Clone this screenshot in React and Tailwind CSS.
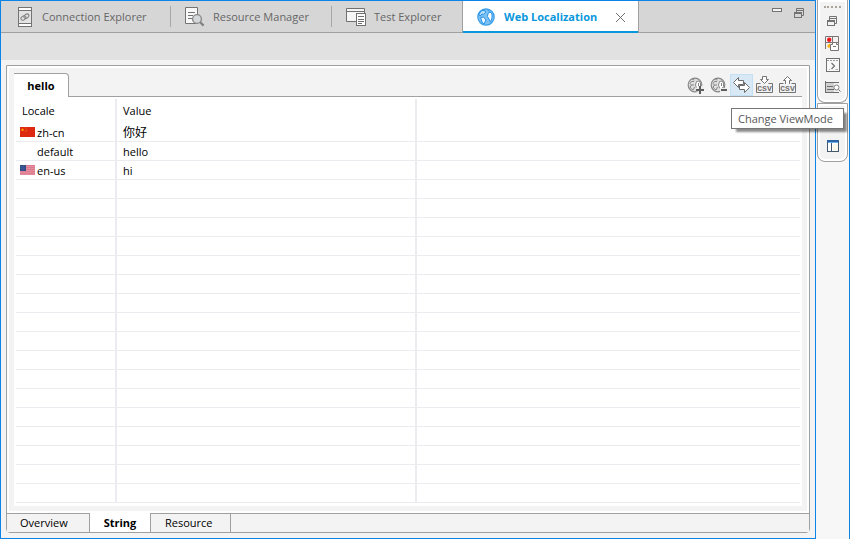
import React from 'react';

function ConnectionIcon() {
  return (
    <svg width="16" height="20" viewBox="0 0 16 20" fill="none" stroke="#737373" aria-hidden="true">
      <rect x="1.5" y="0.5" width="13" height="19" fill="#fff" />
      <rect x="2" y="4" width="12" height="12" fill="#e4e4e4" stroke="none" />
      <path d="M2 3.5H14M2 16.5H14" />
      <ellipse cx="6.4" cy="11" rx="2.7" ry="1.9" transform="rotate(-35 6.4 11)" stroke="#808080" />
      <ellipse cx="9.4" cy="9.2" rx="2.7" ry="1.9" transform="rotate(-35 9.4 9.2)" stroke="#808080" />
    </svg>
  );
}

function ResourceIcon() {
  return (
    <svg width="20" height="20" viewBox="0 0 20 20" fill="none" stroke="#737373" aria-hidden="true">
      <path d="M0.5 0.5H12.5V16.5H0.5Z" fill="#f8f8f8" />
      <path d="M3 5.5H10M3 8.5H8M3 11.5H7" />
      <circle cx="12" cy="12" r="4.4" fill="#d5d8da" stroke="#8a8a8a" strokeWidth="1.4" />
      <path d="M15.2 15.2L18.6 18.6" stroke="#808080" strokeWidth="2.2" />
    </svg>
  );
}

function TestIcon() {
  return (
    <svg width="20" height="20" viewBox="0 0 20 20" fill="none" stroke="#707070" aria-hidden="true">
      <path d="M0.5 1.5H18.5V14.5H0.5Z" fill="#f6f6f6" />
      <path d="M1 4.5H18" />
      <rect x="10.5" y="6.5" width="9" height="12" fill="#fff" />
      <path d="M12 9.5H18M12 12.5H18M12 14.5H18M12 16.5H16" />
    </svg>
  );
}

function GlobeIcon() {
  return (
    <svg width="18" height="18" viewBox="0 0 18 18" fill="none" aria-hidden="true">
      <circle cx="9" cy="9" r="8.2" fill="#7cc0f4" stroke="#3a9ee9" strokeWidth="1.2" />
      <path d="M4 3L7.5 2L8.5 4.5L6.5 6.5L5 6L3 8L2 6.5Z" fill="#b9def8" stroke="#2392e8" />
      <path d="M3.5 9.5L6.5 9L9 12L7 16L5 14Z" fill="#eaf5fd" stroke="#2392e8" />
      <path d="M11 5.5L13 4L15 6V10L13.5 14L12 11L10.5 8.5Z" fill="#fff" stroke="#2392e8" />
      <path d="M10.5 1.5L12 3.5" stroke="#2392e8" />
    </svg>
  );
}

function CloseIcon() {
  return (
    <svg width="11" height="11" viewBox="0 0 11 11" stroke="#707070" aria-hidden="true">
      <path d="M1 1L10 10M10 1L1 10" />
    </svg>
  );
}

function RestoreIcon() {
  return (
    <svg width="11" height="11" viewBox="0 0 11 11" fill="none" stroke="#737373" aria-hidden="true">
      <path d="M2.5 4V0.5H9.5V7.5H7M3 2.5H9" />
      <rect x="0.5" y="4.5" width="7" height="5" />
      <path d="M1 5.5H7" />
    </svg>
  );
}

function LocaleIcon({ add }) {
  return (
    <svg width="17" height="17" viewBox="0 0 17 17" fill="none" stroke="#858585" aria-hidden="true">
      <circle cx="8" cy="8" r="6.8" fill="#e0e0e0" strokeWidth="1.2" />
      <path d="M7 4.5H4.5L3 6.5L4.5 8L3 10L5 12.5H6.5L7.5 10M4.5 8H7M5.5 2.5L7.5 3" />
      <path d="M9.5 4.5L12 4L13.5 6V9.5L11.5 12L9.5 11L8.5 8Z" fill="#fff" />
      <path d="M11.5 6V9" />
      <path d={add ? 'M9 12.5H17M13 9V16' : 'M10 13H17'} stroke="#ededed" strokeWidth="4" />
      <path d={add ? 'M9 13H17M13 9V17' : 'M11 13H17'} stroke="#5e5e5e" strokeWidth="2" />
    </svg>
  );
}

function SwapIcon() {
  return (
    <svg width="17" height="17" viewBox="0 0 17 17" fill="#fff" stroke="#6c6c6c" aria-hidden="true">
      <path d="M0.5 5.5L5.5 0.5V3.5H10.5V7.5H5.5V10.5Z" />
      <path d="M16.5 10.5L11.5 5.5V8.5H6.5V12.5H11.5V15.5Z" />
    </svg>
  );
}

function CsvIcon({ up }) {
  return (
    <svg width="17" height="18" viewBox="0 0 17 18" fill="#fff" stroke="#737373" aria-hidden="true">
      <path d={up ? 'M6.5 8V4.5H4.5L8.5 0.5L12.5 4.5H10.5V8' : 'M6.5 0.5H10.5V3.5H12.5L8.5 7.5L4.5 3.5H6.5Z'} />
      <path d="M4.5 7.5H0.5V16.5H16.5V7.5H12.5" fill="none" />
      <path d="M1 8.5H16V16H1Z" fill="#f3f3f3" stroke="none" />
      <text x="8.5" y="15" textAnchor="middle" fill="#707070" stroke="none" className="font-['Liberation_Mono',monospace] text-[8px] font-bold">CSV</text>
    </svg>
  );
}

function ChinaFlag() {
  return (
    <svg width="15" height="10" viewBox="0 0 15 10" aria-hidden="true">
      <path d="M0 0H15V10H0Z" fill="#de2910" />
      <path d="M2.5 1L3 2.2H4.2L3.3 3L3.6 4.2L2.5 3.5L1.4 4.2L1.7 3L0.8 2.2H2Z" fill="#ffb400" />
      <path d="M5 0.5H6V1.3H5ZM6 1.8H7V2.6H6ZM6 3.2H7V4H6ZM5 4.3H6V5H5Z" fill="#e8700f" />
    </svg>
  );
}

function UsFlag() {
  return (
    <svg width="15" height="10" viewBox="0 0 15 10" aria-hidden="true">
      <path d="M0 0H15V10H0Z" fill="#e58c9d" />
      <path d="M0 0.5H15M0 2.5H15M0 4.5H15M0 6.5H15M0 8.5H15" stroke="#dc7a90" />
      <path d="M0 0H6V6H0Z" fill="#33508c" />
      <path d="M1 1.5H5M1 3.5H5" stroke="#48659a" strokeDasharray="1 1" />
    </svg>
  );
}

function GridIcon() {
  return (
    <svg width="15" height="15" viewBox="0 0 15 15" fill="none" stroke="#7c7474" aria-hidden="true">
      <path d="M0.5 13V0.5H13.5V8M0 6.5H13.5M7.5 0V8" fill="#f3f0f0" />
      <circle cx="4.2" cy="3.8" r="2.2" fill="#f01818" stroke="none" />
      <path d="M2 10L4.5 7.5L6 9L4 12.5Z" fill="#f9b515" stroke="none" />
      <path d="M5.5 8.5H7.5V6.5H11.5V8.5H13.5V14.5H5.5Z" fill="#fff" />
      <path d="M8 10.5H11" />
    </svg>
  );
}

function ConsoleIcon() {
  return (
    <svg width="14" height="14" viewBox="0 0 14 14" fill="none" stroke="#707070" aria-hidden="true">
      <rect x="0.5" y="0.5" width="13" height="13" fill="#f8f8f8" />
      <path d="M1 2.5H13" strokeDasharray="2 1" stroke="#9a9a9a" />
      <path d="M5.5 5L8.5 8L5.5 11" strokeWidth="1.2" />
      <path d="M3 11.5H4M9.5 11.5H12" stroke="#b0b0b0" />
    </svg>
  );
}

function SearchPanelIcon() {
  return (
    <svg width="16" height="13" viewBox="0 0 16 13" fill="none" stroke="#6c6c6c" aria-hidden="true">
      <path d="M1 2H9V11H1Z" fill="#cfcfcf" stroke="none" />
      <path d="M1 1.5H14M0.5 0V12M0 11.5H14" />
      <path d="M2 5.5H8M2 8.5H9" />
      <circle cx="11.5" cy="6.5" r="2.5" fill="#fff" stroke="#808080" />
      <path d="M13.5 8.5L15.5 10.5" />
    </svg>
  );
}

function LayoutIcon() {
  return (
    <svg width="12" height="12" viewBox="0 0 12 12" fill="none" aria-hidden="true">
      <rect x="0.5" y="0.5" width="11" height="11" fill="#fff" stroke="#44596d" />
      <path d="M0 1H12" stroke="#2d63a4" strokeWidth="2" />
      <path d="M1 2.5H11" stroke="#6fb2ea" />
      <path d="M4.5 3V11" stroke="#44596d" />
      <path d="M6 4H11V11H6Z" fill="#fbf9ec" />
    </svg>
  );
}

const rows = [
  { locale: 'zh-cn', value: '你好', flag: <ChinaFlag /> },
  { locale: 'default', value: 'hello' },
  { locale: 'en-us', value: 'hi', flag: <UsFlag /> },
  ...Array.from({ length: 17 }, () => ({ locale: '', value: '' })),
];

function ViewTab({ icon, label, className }) {
  return (
    <button type="button" className={`flex items-center self-stretch text-[#666] ${className}`}>
      {icon}
      <span>{label}</span>
    </button>
  );
}

function TabRule() {
  return <span className="h-[21px] w-px bg-[#a8a8a8]" />;
}

function ViewTabs() {
  return (
    <header className="flex h-8 items-stretch bg-[#d6d6d6]">
      <div className="flex items-center border-b border-[#a0a0a0]">
        <ViewTab icon={<ConnectionIcon />} label="Connection Explorer" className="w-[169px] gap-[9px] pl-4" />
        <TabRule />
        <ViewTab icon={<ResourceIcon />} label="Resource Manager" className="w-40 gap-2 pl-[14px]" />
        <TabRule />
        <ViewTab icon={<TestIcon />} label="Test Explorer" className="w-[130px] gap-2 pl-[14px]" />
      </div>
      <div className="flex w-[177px] items-center border-x border-[#a0a0a0] bg-white shadow-[inset_0_-2px_0_#0a97dc]">
        <button type="button" className="flex items-center gap-[9px] pl-[14px] font-bold text-[#0a97dc]">
          <GlobeIcon />
          <span>Web Localization</span>
        </button>
        <button type="button" aria-label="Close" className="mr-3 ml-auto">
          <CloseIcon />
        </button>
      </div>
      <div className="flex flex-1 items-start justify-end gap-3 border-b border-[#a0a0a0] pt-[7px] pr-[10px]">
        <button type="button" aria-label="Minimize" className="h-1 w-[10px] border border-[#737373] bg-[#f3f3f3]" />
        <button type="button" aria-label="Restore">
          <RestoreIcon />
        </button>
      </div>
    </header>
  );
}

function ToolButton({ label, active, children }) {
  return (
    <button
      type="button"
      aria-label={label}
      className={`flex h-[22px] w-[23px] items-center justify-center border ${
        active ? 'border-[#c3e0f5] bg-[#d9e8f5]' : 'border-transparent'
      }`}
    >
      {children}
    </button>
  );
}

function Toolbar() {
  return (
    <div className="flex flex-1 justify-end border-b border-[#a0a0a0] pt-px pr-[3px]">
      <ToolButton label="Add locale"><LocaleIcon add /></ToolButton>
      <ToolButton label="Remove locale"><LocaleIcon /></ToolButton>
      <div className="relative">
        <ToolButton label="Change ViewMode" active><SwapIcon /></ToolButton>
        <div role="tooltip" className="absolute top-[34px] left-px z-10 flex h-[21px] w-[113px] items-center border border-[#767676] bg-white pl-[6px] whitespace-nowrap text-[#575757] shadow-[4px_4px_2px_-1px_rgba(0,0,0,0.45)]">
          Change ViewMode
        </div>
      </div>
      <ToolButton label="Import CSV"><CsvIcon /></ToolButton>
      <ToolButton label="Export CSV"><CsvIcon up /></ToolButton>
    </div>
  );
}

function LocaleTable() {
  return (
    <table className="w-full table-fixed border-separate border-spacing-0 text-left text-black">
      <colgroup>
        <col className="w-[101px]" />
        <col className="w-[300px]" />
        <col />
      </colgroup>
      <thead>
        <tr className="h-6">
          <th scope="col" className="border-r-2 border-[#ebebf0] p-0 pl-[6px] font-normal">Locale</th>
          <th scope="col" className="border-r-2 border-[#ebebf0] p-0 pl-[6px] font-normal">Value</th>
          <td className="p-0" />
        </tr>
      </thead>
      <tbody>
        {rows.map((row, i) => (
          <tr key={i} className="h-[19px]">
            <td className="border-r-2 border-b border-[#ebebf0] p-0 pt-[2px] pl-1">
              <div className="flex items-start gap-[2px]">
                <span className="w-[15px] pt-[2px]">{row.flag}</span>
                <span>{row.locale}</span>
              </div>
            </td>
            <td className="border-r-2 border-b border-[#ebebf0] p-0 pt-[2px] pl-[6px]">
              {row.value === '你好' ? <div lang="zh-CN" className="text-xs leading-4">{row.value}</div> : row.value}
            </td>
            <td className="border-b border-[#ebebf0] p-0" />
          </tr>
        ))}
      </tbody>
    </table>
  );
}

function PageTabs() {
  return (
    <nav className="flex h-[19px] bg-[#f3f3f3] text-black">
      <button type="button" className="w-[83px] border-t border-r border-[#a0a0a0] pl-[13px] text-left">Overview</button>
      <button type="button" className="w-[60px] bg-white font-bold">String</button>
      <button type="button" className="w-[81px] border-x border-t border-[#a0a0a0] pl-[14px] text-left">Resource</button>
      <div className="flex-1 border-t border-[#a0a0a0]" />
    </nav>
  );
}

function EditorPanel() {
  return (
    <section className="flex flex-1 flex-col rounded-b border border-[#a0a0a0] bg-white">
      <div className="flex flex-1 flex-col p-[2px]">
        <div className="flex flex-1 flex-col bg-[#f3f3f3] p-[5px]">
          <div className="flex h-6">
            <button type="button" className="w-[55px] rounded-tr-sm border-t border-r border-[#a0a0a0] bg-white font-bold text-black">hello</button>
            <Toolbar />
          </div>
          <div className="flex-1 bg-white px-[2px] pt-[2px] pb-[3px]">
            <LocaleTable />
          </div>
        </div>
      </div>
      <PageTabs />
    </section>
  );
}

function SideBar() {
  return (
    <aside className="flex w-[34px] flex-col border-r border-[#1083dc] bg-[#f7f7f7] px-px">
      <div className="flex h-[103px] flex-col items-center gap-2 rounded-b-lg border-x border-b border-[#a0a0a0] bg-[#f3f3f3] pt-[6px] shadow-[inset_0_0_0_2px_#fff]">
        <div className="h-[2px] w-[17px] border-t-2 border-dotted border-[#a8a49a]" />
        <button type="button" aria-label="Restore view"><RestoreIcon /></button>
        <button type="button" aria-label="Resources" className="mt-px"><GridIcon /></button>
        <button type="button" aria-label="Console" className="-mt-px"><ConsoleIcon /></button>
        <button type="button" aria-label="Search" className="mt-px"><SearchPanelIcon /></button>
      </div>
      <div className="flex h-[59px] flex-col items-center gap-[10px] rounded-b-lg border border-[#a0a0a0] bg-[#f3f3f3] pt-[15px] shadow-[inset_0_0_0_2px_#fff]">
        <button type="button" aria-label="Restore outline"><RestoreIcon /></button>
        <button type="button" aria-label="Outline"><LayoutIcon /></button>
      </div>
    </aside>
  );
}

export default function App() {
  return (
    <div className="flex min-h-screen font-['Open_Sans','Noto_Sans_CJK_SC',sans-serif] text-[11px] leading-4 [&_svg]:block">
      <main className="flex min-w-0 flex-1 flex-col border border-[#0a84e8] bg-[#f3f3f3]">
        <ViewTabs />
        <div className="h-[27px] bg-[#e1e1e1]" />
        <div className="flex flex-1 flex-col p-[5px]">
          <EditorPanel />
        </div>
      </main>
      <SideBar />
    </div>
  );
}
